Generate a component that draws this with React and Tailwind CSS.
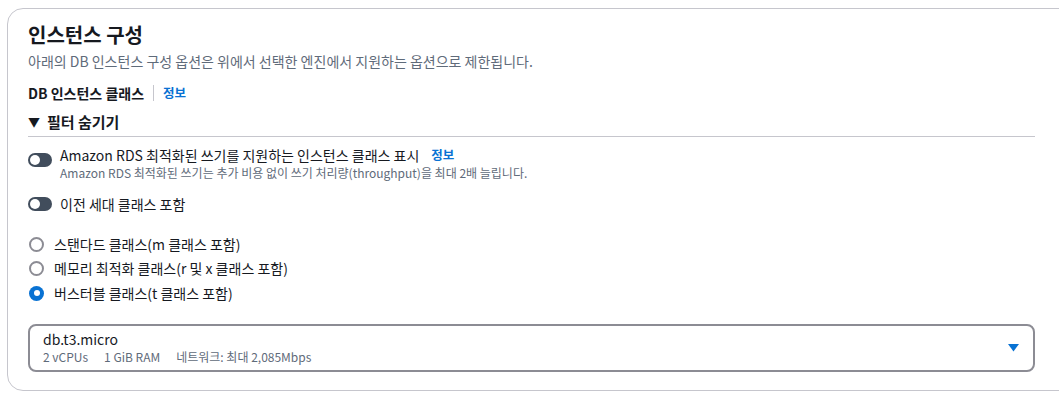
import React, { useState } from 'react';

const Toggle = ({ on }) => (
  <span className={`relative inline-flex w-6 h-[14px] rounded-full shrink-0 ${on ? 'bg-[#0972d3]' : 'bg-[#414d5c]'}`}>
    <span className={`absolute top-[2px] w-[10px] h-[10px] rounded-full bg-white ${on ? 'left-[12px]' : 'left-[2px]'}`} />
  </span>
);

const Radio = ({ checked, label, onClick }) => (
  <label className="flex items-center gap-[10px] h-[24.5px] cursor-pointer" onClick={onClick}>
    {checked ? (
      <span className="w-[15px] h-[15px] rounded-full bg-[#0972d3] flex items-center justify-center shrink-0">
        <span className="w-[6px] h-[6px] rounded-full bg-white" />
      </span>
    ) : (
      <span className="w-[15px] h-[15px] rounded-full border-2 border-[#8c8c94] bg-white shrink-0" />
    )}
    <span className="text-[14px] text-[#16191f]">{label}</span>
  </label>
);

const classes = [
  '스탠다드 클래스(m 클래스 포함)',
  '메모리 최적화 클래스(r 및 x 클래스 포함)',
  '버스터블 클래스(t 클래스 포함)',
];

export default function App() {
  const [sel, setSel] = useState(2);

  return (
    <div className="w-[1059px] h-[402px] overflow-hidden bg-white font-['Noto_Sans_CJK_KR','Noto_Sans',sans-serif] text-[#16191f]">
      <div className="ml-[7px] mt-[8px] w-[1072px] h-[383px] border border-[#c6c6cd] rounded-[16px] pl-[20px] pt-[13px]">
        <div className="w-[1007px]">
          <h2 className="text-[20px] font-bold leading-[26px]">인스턴스 구성</h2>
          <p className="text-[14px] text-[#5f6b7a] leading-[20px] mt-[3px]">
            아래의 DB 인스턴스 구성 옵션은 위에서 선택한 엔진에서 지원하는 옵션으로 제한됩니다.
          </p>

          <div className="flex items-center mt-[12px] h-[20px]">
            <span className="text-[14px] font-bold">DB 인스턴스 클래스</span>
            <span className="w-px h-[16px] bg-[#c6c6cd] mx-[9px]" />
            <span className="text-[12.5px] font-bold text-[#0972d3]">정보</span>
          </div>

          <div className="mt-[8px] flex items-center gap-[7px] h-[22px]">
            <span className="text-[12px] leading-none">▼</span>
            <span className="text-[15px] font-bold">필터 숨기기</span>
          </div>
          <div className="mt-[3px] h-px bg-[#c6c6cd]" />

          <div className="mt-[8px] flex items-start gap-[8px]">
            <span className="mt-[3px]"><Toggle on={false} /></span>
            <div>
              <div className="flex items-center h-[20px]">
                <span className="text-[14px]">Amazon RDS 최적화된 쓰기를 지원하는 인스턴스 클래스 표시</span>
                <span className="text-[12.5px] font-bold text-[#0972d3] ml-[12px]">정보</span>
              </div>
              <div className="text-[12px] text-[#5f6b7a] leading-[16px]">
                Amazon RDS 최적화된 쓰기는 추가 비용 없이 쓰기 처리량(throughput)을 최대 2배 늘립니다.
              </div>
            </div>
          </div>

          <div className="mt-[12px] flex items-center gap-[8px] h-[22px]">
            <Toggle on={false} />
            <span className="text-[14px]">이전 세대 클래스 포함</span>
          </div>

          <div className="mt-[17px] flex flex-col pl-[1px]">
            {classes.map((c, i) => (
              <Radio key={i} label={c} checked={sel === i} onClick={() => setSel(i)} />
            ))}
          </div>

          <div className="mt-[18px] h-[48px] border-2 border-[#8c8c94] rounded-[8px] flex items-center pl-[13px] pr-[14px]">
            <div className="flex-1">
              <div className="text-[14px] leading-[19px]">db.t3.micro</div>
              <div className="flex gap-[16px] text-[12px] text-[#5f6b7a] leading-[16px]">
                <span>2 vCPUs</span>
                <span>1 GiB RAM</span>
                <span>네트워크: 최대 2,085Mbps</span>
              </div>
            </div>
            <svg width="11" height="8" viewBox="0 0 11 8">
              <path d="M0 0 H11 L5.5 7.5 Z" fill="#0972d3" />
            </svg>
          </div>
        </div>
      </div>
    </div>
  );
}
